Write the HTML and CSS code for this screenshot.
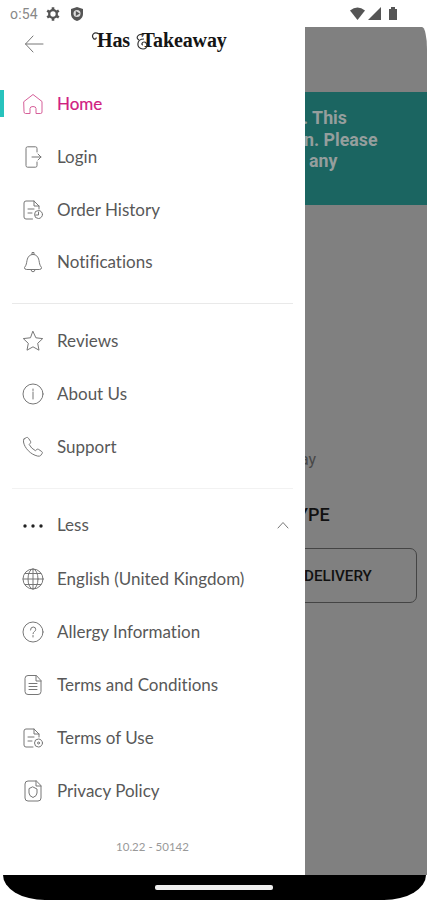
FILE: index.html
```html
<!DOCTYPE html>
<html lang="en">
<head>
<meta charset="utf-8">
<title>Has Takeaway</title>
<link rel="stylesheet" href="styles.css">
</head>
<body>
<div class="phone">
  <header class="status">
    <span class="time">o:54</span>
    <svg class="gear" width="14" height="14" viewBox="0 0 14 14"><circle cx="7" cy="7" r="3.8" fill="none" stroke="#555" stroke-width="2.3"/><path d="M7 .3v3M7 10.7v3M1.2 3.6l2.6 1.6M10.2 8.8l2.6 1.6M1.2 10.4l2.6-1.6M10.2 5.2l2.6-1.6" stroke="#555" stroke-width="2.6"/></svg>
    <svg class="shield" width="12" height="14" viewBox="0 0 12 14"><path d="M6 0l6 2v5c0 3.300-2.500 6-6 7C2.500 13 0 10.300 0 7V2z" fill="#555"/><circle cx="6" cy="6.500" r="3.500" fill="#ddd"/><path d="M4.800 4l4 2.500-4 2.500z" fill="#555"/></svg>
    <svg class="signals" width="48" height="14" viewBox="0 0 48 14"><path d="M0 3.500Q7.500-2.500 15 3.500L7.500 13z" fill="#555"/><path d="M31 0v13H18z" fill="#555"/><path d="M39 2h2V0h4v2h2v11h-8z" fill="#555"/></svg>
  </header>
  <div class="screen">
    <aside class="drawer">
      <div class="brand">
        <svg width="20" height="18" viewBox="0 0 20 18" class="icon"><path d="M19 9H1.500M9 1L1.500 9 9 17"/></svg>
        <h1>Has Takeaway</h1>
        <svg class="swash" width="64" height="22" viewBox="0 0 64 22"><path d="M8 3C3 0 0 4 2.500 7.500c1.500 1.500 3 0 2.500-1"/><path d="M53 4c-6-2-9 3-5 5M53 8c-8 0-8 10-1 10 5 0 5-7 1-7-2 0-3 3-1 3"/></svg>
      </div>
      <nav class="group first">
        <a class="row active"><svg class="icon" viewBox="0 0 22 22"><path d="M2 8.500L11 1.500l9 7V19q0 1.500-1.500 1.500H14v-5q0-2-3-2t-3 2v5H3.500Q2 20.500 2 19z"/></svg>Home</a>
        <a class="row"><svg class="icon" viewBox="0 0 22 22"><path d="M15 6V2.500Q15 .8 13.500.8h-8Q4 .8 4 2.500v17q0 1.700 1.500 1.700h8q1.500 0 1.500-1.700V16M10 11h9M16 8l3 3-3 3"/></svg>Login</a>
        <a class="row"><svg class="icon" viewBox="0 0 22 22"><path d="M10.500 20H4q-2 0-2-2V4q0-2 2-2h8l5 5v3M12 2v5h5M6 10h6M6 14h4"/><circle cx="16.500" cy="15.500" r="4"/><path d="M16.500 13v3h-3"/></svg>Order History</a>
        <a class="row"><svg class="icon" viewBox="0 0 22 22"><path d="M4.300 18.500Q2.300 18.500 2.500 16.500C4.500 14 4.500 12 5 9.500 5.800 5.500 8 3.500 11 3.500s5.200 2 6 6c.5 2.500.5 4.500 2.500 7q.2 2-1.800 2zM10 3.500V1.500h2v2M9 18.500q0 2.300 2 2.300t2-2.300"/></svg>Notifications</a>
      </nav>
      <hr>
      <nav class="group second">
        <a class="row"><svg class="icon" viewBox="0 0 22 22"><path d="M11 1.500l2.900 6.300 6.800.8-5 4.700 1.300 6.900-6-3.400-6 3.400 1.300-6.900-5-4.700 6.800-.8z"/></svg>Reviews</a>
        <a class="row"><svg class="icon" viewBox="0 0 22 22"><circle cx="11" cy="11" r="10"/><path d="M11 9v7M11 6v1.500"/></svg>About Us</a>
        <a class="row"><svg class="icon" viewBox="0 0 22 22"><path d="M2 3L4.500 1.500q1-.5 2 .8l2 3q.6 1-.2 1.900L7.200 8.500q2 4 6.200 6.200l1.500-1.300q.8-.6 1.700 0l3.200 2.200q1 .8.4 1.700l-1.500 2.200q-1 1-3 .6C8.500 18.500 2.500 12 1.500 6q-.2-2 .5-3z"/></svg>Support</a>
      </nav>
      <hr class="faint">
      <nav class="group third">
        <a class="row"><svg class="icon" viewBox="0 0 22 22"><g fill="#222" stroke="none"><circle cx="3" cy="12" r="1.700"/><circle cx="11" cy="12" r="1.700"/><circle cx="19" cy="12" r="1.700"/></g></svg>Less<svg class="icon chevron" viewBox="0 0 12 8"><path d="M1 7l5-5.500L11 7"/></svg></a>
        <a class="row"><svg class="icon" viewBox="0 0 22 22"><circle cx="11" cy="11" r="10"/><ellipse cx="11" cy="11" rx="5" ry="10"/><path d="M11 1v20M1 11h20M3 5.500h16M3 16.500h16"/></svg>English (United Kingdom)</a>
        <a class="row"><svg class="icon" viewBox="0 0 22 22"><circle cx="11" cy="11" r="10"/><path d="M8.500 9q0-3 2.700-3t2.500 2.700c0 1.800-2.700 1.800-2.700 4M11 14.500V16"/></svg>Allergy Information</a>
        <a class="row"><svg class="icon" viewBox="0 0 22 22"><path d="M14 1.500H6q-3 0-3 3v13q0 3 3 3h10q3 0 3-3V7zM14 1.500V7H19M7 9.500h8M7 12.500h8M7 15.500h8"/></svg>Terms and Conditions</a>
        <a class="row"><svg class="icon" viewBox="0 0 22 22"><path d="M11 20H4q-2 0-2-2V4q0-2 2-2h8l5 5v3M12 2v5h5M6 10h6M6 14h4"/><circle cx="16.500" cy="16" r="4"/><circle cx="16.500" cy="16" r="1"/></svg>Terms of Use</a>
        <a class="row"><svg class="icon" viewBox="0 0 22 22"><path d="M14 1H6Q3 1 3 4v14q0 3 3 3h10q3 0 3-3V6zM14 1v5h5M11 7l4 2v4q0 3-4 4.500-4-1.500-4-4.500V9z"/></svg>Privacy Policy</a>
      </nav>
      <footer class="version">10.22 - 50142</footer>
    </aside>
    <main class="page">
      <section class="notice">
        <p class="line-a">. This</p>
        <p class="line-b">n. Please</p>
        <p class="line-c">any</p>
      </section>
      <p class="caption">ay</p>
      <h2>YPE</h2>
      <div class="choice">DELIVERY</div>
    </main>
  </div>
  <div class="navbar"><div class="handle"></div></div>
</div>
</body>
</html>
```

FILE: styles.css
```css
* { box-sizing: border-box; margin: 0; padding: 0; }
body { background: #fff; font-family: Lato, sans-serif; }
.phone { width: 427px; height: 900px; overflow: hidden; display: flex; flex-direction: column; }
.status { height: 27px; display: flex; align-items: center; padding: 1px 29px 0 10px; color: #888; }
.time { font: 14px Roboto, sans-serif; width: 36px; letter-spacing: .2px; }
.shield { margin-left: 11px; }
.signals { margin-left: auto; }
.screen { display: flex; height: 848px; }
.drawer { width: 305px; background: #fff; }
.brand { height: 51px; display: flex; padding: 0 0 0 24px; position: relative; }
.brand > .icon { width: 20px; height: 18px; margin-top: 8px; }
h1 { font: bold 20px/26px "Liberation Serif", serif; color: #151515; margin-left: 53px; white-space: nowrap; word-spacing: 7px; letter-spacing: -.1px; }
.swash { position: absolute; left: 91px; top: 4px; fill: none; stroke: #333; stroke-width: 1.2; }
.icon { width: 22px; height: 22px; flex: none; fill: none; stroke: #777; stroke-width: 1; stroke-linejoin: round; stroke-linecap: round; }
.row { display: flex; align-items: center; gap: 13px; padding: 0 16px 0 22px; font-size: 17px; line-height: 22px; color: #585858; white-space: nowrap; font-variant-ligatures: none; }
.first .row { height: 52.7px; }
.second .row { height: 53px; }
.third .row { height: 53.2px; }
.active { color: #d0207f; position: relative; -webkit-text-stroke: .2px #d0207f; }
.active .icon { stroke: #d65f99; }
.active::before { content: ""; position: absolute; left: 0; top: 12px; width: 4px; height: 27px; background: #28c3bd; }
hr { border: 0; height: 1px; background: #e9e9e9; margin: 14px 12px 11px; }
hr.faint { background: #f2f2f2; margin: 14px 12px 10px; }
.chevron { width: 12px; height: 8px; margin-left: auto; }
.version { margin-top: 20px; text-align: center; font-size: 11.500px; line-height: 18px; color: #999; }
.page { flex: 1; background: #808080; overflow: hidden; border-top-right-radius: 5px 22px; }
.notice { margin-top: 65px; height: 113px; padding-top: 15px; background: #1b6561; color: #959e9d; font: bold 17.800px/21.500px Roboto, sans-serif; white-space: nowrap; }
.line-a { margin-left: -2px; }
.line-b { margin-left: -1px; }
.line-c { margin-left: 4px; }
.caption { margin: 244px 0 0 -5px; font: 16px/22px Roboto, sans-serif; color: #484848; }
h2 { margin: 33px 0 0 -8px; font: 500 18px/22px Roboto, sans-serif; color: #111; }
.choice { margin: 22px 10px 0 -10px; height: 55px; border: 1px solid #444; border-radius: 7px; padding-left: 8px; font: 500 15.200px/55px Roboto, sans-serif; color: #111; }
.navbar { width: 423px; height: 25px; margin-left: 3px; background: #000; border-radius: 0 0 42px 42px / 0 0 25px 25px; padding-top: 10px; }
.handle { width: 118px; height: 5px; margin-left: 152px; background: #eee; border-radius: 2px; }
```
